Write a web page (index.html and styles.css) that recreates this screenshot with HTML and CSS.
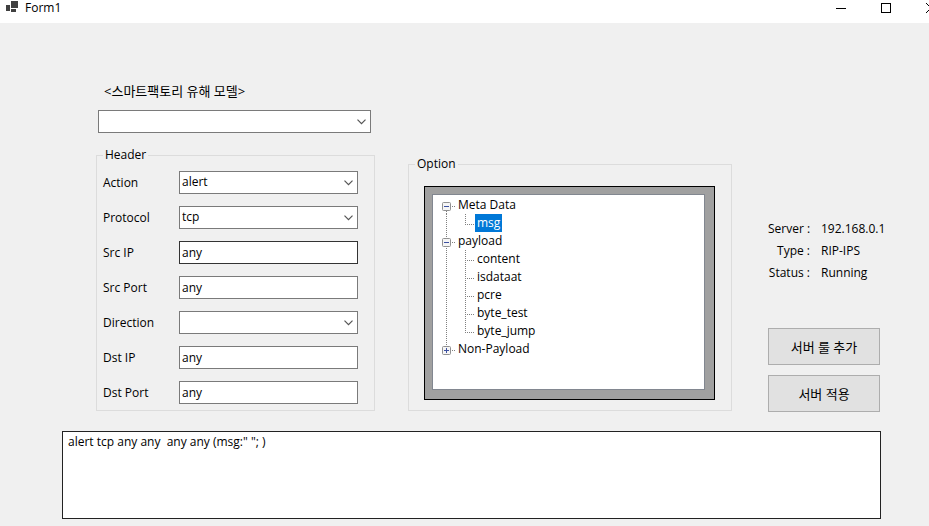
FILE: index.html
```html
<!DOCTYPE html>
<html lang="ko">
<head>
<meta charset="utf-8">
<title>Form1</title>
<link rel="stylesheet" href="styles.css">
</head>
<body>
<header class="titlebar">
  <svg class="app-icon" width="14" height="12" viewBox="0 0 14 12" shape-rendering="crispEdges" aria-hidden="true"><path fill="#404040" d="M0 5h4v6H0zM5 1h7v7H5zM5 9h5v3H5z"/></svg>
  <h1 class="title">Form1</h1>
  <div class="window-buttons">
    <button type="button" aria-label="Minimize"><svg width="10" height="10" viewBox="0 0 10 10" shape-rendering="crispEdges"><path fill="#000" d="M0 5h10v1H0z"/></svg></button>
    <button type="button" aria-label="Maximize"><svg width="10" height="10" viewBox="0 0 10 10" shape-rendering="crispEdges"><path fill="none" stroke="#000" d="M.5.5h9v9h-9z"/></svg></button>
    <button type="button" aria-label="Close"><svg width="10" height="10" viewBox="0 0 10 10"><path fill="none" stroke="#000" d="M0 0l10 10M10 0L0 10"/></svg></button>
  </div>
</header>
<main class="form">
  <div class="upper">
    <section class="left">
      <label class="model-label" for="model">&lt;스마트팩토리 유해 모델&gt;</label>
      <div class="combo model-combo">
        <select id="model"><option></option></select>
        <svg class="chevron" width="9" height="6" viewBox="0 0 9 6"><path d="M.5.7l4 4 4-4"/></svg>
      </div>
      <fieldset class="group header-group">
        <legend>Header</legend>
        <div class="fields">
          <label for="action">Action</label>
          <div class="combo">
            <select id="action"><option>alert</option></select>
            <svg class="chevron" width="9" height="6" viewBox="0 0 9 6"><path d="M.5.7l4 4 4-4"/></svg>
          </div>
          <label for="protocol">Protocol</label>
          <div class="combo">
            <select id="protocol"><option>tcp</option></select>
            <svg class="chevron" width="9" height="6" viewBox="0 0 9 6"><path d="M.5.7l4 4 4-4"/></svg>
          </div>
          <label for="src-ip">Src IP</label>
          <input class="hot" id="src-ip" type="text" value="any">
          <label for="src-port">Src Port</label>
          <input id="src-port" type="text" value="any">
          <label for="direction">Direction</label>
          <div class="combo">
            <select id="direction"><option></option></select>
            <svg class="chevron" width="9" height="6" viewBox="0 0 9 6"><path d="M.5.7l4 4 4-4"/></svg>
          </div>
          <label for="dst-ip">Dst IP</label>
          <input id="dst-ip" type="text" value="any">
          <label for="dst-port">Dst Port</label>
          <input id="dst-port" type="text" value="any">
        </div>
      </fieldset>
    </section>

    <fieldset class="group option-group">
      <legend>Option</legend>
      <div class="panel">
        <ul class="tree">
          <li><svg width="23" height="18"><path class="dots" d="M13.5 15v3M19 10.5h4"/><rect class="box" x="9.500" y="6.500" width="8" height="8" rx="1"/><path class="sign" d="M11 10.500h5"/></svg><span>Meta Data</span></li>
          <li><svg width="42" height="18"><path class="dots" d="M13.5 0v18M32.5 0v10M32 10.5h9"/></svg><span class="selected">msg</span></li>
          <li><svg width="23" height="18"><path class="dots" d="M13.5 0v18M19 10.5h4"/><rect class="box" x="9.500" y="6.500" width="8" height="8" rx="1"/><path class="sign" d="M11 10.500h5"/></svg><span>payload</span></li>
          <li><svg width="42" height="18"><path class="dots" d="M13.5 0v18M32.5 0v18M32 10.5h9"/></svg><span>content</span></li>
          <li><svg width="42" height="18"><path class="dots" d="M13.5 0v18M32.5 0v18M32 10.5h9"/></svg><span>isdataat</span></li>
          <li><svg width="42" height="18"><path class="dots" d="M13.5 0v18M32.5 0v18M32 10.5h9"/></svg><span>pcre</span></li>
          <li><svg width="42" height="18"><path class="dots" d="M13.5 0v18M32.5 0v18M32 10.5h9"/></svg><span>byte_test</span></li>
          <li><svg width="42" height="18"><path class="dots" d="M13.5 0v18M32.5 0v10M32 10.5h9"/></svg><span>byte_jump</span></li>
          <li><svg width="23" height="18"><path class="dots" d="M13.5 0v6M19 10.5h4"/><rect class="box" x="9.500" y="6.500" width="8" height="8" rx="1"/><path class="sign" d="M11 10.500h5M13.500 8v5"/></svg><span>Non-Payload</span></li>
        </ul>
      </div>
    </fieldset>

    <section class="side">
      <dl class="status">
        <dt>Server :</dt><dd>192.168.0.1</dd>
        <dt>Type :</dt><dd>RIP-IPS</dd>
        <dt>Status :</dt><dd>Running</dd>
      </dl>
      <button class="action" type="button">서버 룰 추가</button>
      <button class="action" type="button">서버 적용</button>
    </section>
  </div>
  <textarea class="rule" aria-label="Rule">alert tcp any any  any any (msg:" "; )</textarea>
</main>
</body>
</html>
```
FILE: styles.css
```css
* {
  box-sizing: border-box;
}

body {
  margin: 0;
  min-height: 100vh;
  background: #f0f0f0;
  color: #000;
  overflow: hidden;
}

body,
button,
input,
select,
textarea {
  font: 12px/18px "Open Sans", "Noto Sans CJK KR", sans-serif;
}

.titlebar {
  display: flex;
  align-items: flex-start;
  height: 23px;
  padding-left: 6px;
  background: #fff;
}

.title {
  flex: 1;
  margin: 0 0 0 5px;
  font-size: 12px;
  font-weight: 400;
  line-height: 15px;
}

.window-buttons {
  display: flex;
  margin-right: -24px;
}

.window-buttons button {
  width: 45px;
  height: 14px;
  padding: 2px 0 0;
  border: 0;
  background: none;
  line-height: 10px;
}

.window-buttons svg,
.app-icon,
.tree svg {
  display: inline-block;
  flex: none;
  vertical-align: top;
}

.form {
  padding: 58px 48px 7px 62px;
}

.upper {
  display: grid;
  grid-template-columns: 279fr 327fr 113px;
  column-gap: 33px;
  align-items: end;
  padding-left: 34px;
}

.model-label {
  display: block;
  margin: 0 0 9px 8px;
  font-size: 13px;
  line-height: 20px;
}

.combo {
  position: relative;
}

.model-combo {
  margin: 0 4px 13px 2px;
}

input,
select {
  display: block;
  width: 100%;
  height: 23px;
  padding: 0 2px 1px;
  border: 1px solid #7a7a7a;
  border-radius: 0;
  background: #fff;
  color: #000;
  appearance: none;
  outline: none;
}

.hot {
  border-color: #333;
}

.chevron {
  position: absolute;
  right: 5px;
  top: 9px;
  fill: none;
  stroke: #555;
  stroke-width: 1.2;
  pointer-events: none;
}

.group {
  min-width: 0;
  margin: 0;
  border: 1px solid #dcdcdc;
}

.group legend {
  padding: 0 2px;
}

.header-group {
  padding: 7px 16px 6px 6px;
}

.fields {
  display: grid;
  grid-template-columns: 76px 1fr;
  row-gap: 12px;
  align-items: center;
}

.option-group {
  margin-right: 3px;
  padding: 13px 16px 10px 15px;
}

.option-group legend {
  margin-left: -9px;
}

.panel {
  padding: 7px 9px 9px 7px;
  border: 1px solid #000;
  background: #a0a0a0;
}

.tree {
  height: 196px;
  margin: 0;
  padding: 1px 0 0;
  border: 1px solid #828790;
  background: #fff;
  list-style: none;
}

.tree li {
  display: flex;
  height: 18px;
}

.tree span {
  padding: 0 2px;
}

.tree .selected {
  background: #0078d7;
  color: #fff;
}

.dots {
  fill: none;
  stroke: #808080;
  stroke-dasharray: 1 1;
  shape-rendering: crispEdges;
}

.box {
  fill: #f5f5f5;
  stroke: #919191;
}

.sign {
  fill: none;
  stroke: #3c50a0;
}

.side {
  margin-bottom: -1px;
}

.status {
  display: grid;
  grid-template-columns: 42px 1fr;
  grid-auto-rows: 22px;
  column-gap: 11px;
  align-items: center;
  margin: 0 0 44px;
  text-align: right;
  white-space: nowrap;
}

.status dd {
  margin: 0;
  text-align: left;
}

.action {
  display: block;
  width: 112px;
  height: 37px;
  margin-top: 10px;
  border: 1px solid #adadad;
  background: #e1e1e1;
  color: #000;
  font-size: 13px;
}

.action:first-of-type {
  margin-top: 0;
}

.rule {
  display: block;
  width: 100%;
  height: 88px;
  margin-top: 20px;
  padding: 1px 5px;
  border: 1px solid #222;
  background: #fff;
  color: #000;
  resize: none;
  outline: none;
}
```
